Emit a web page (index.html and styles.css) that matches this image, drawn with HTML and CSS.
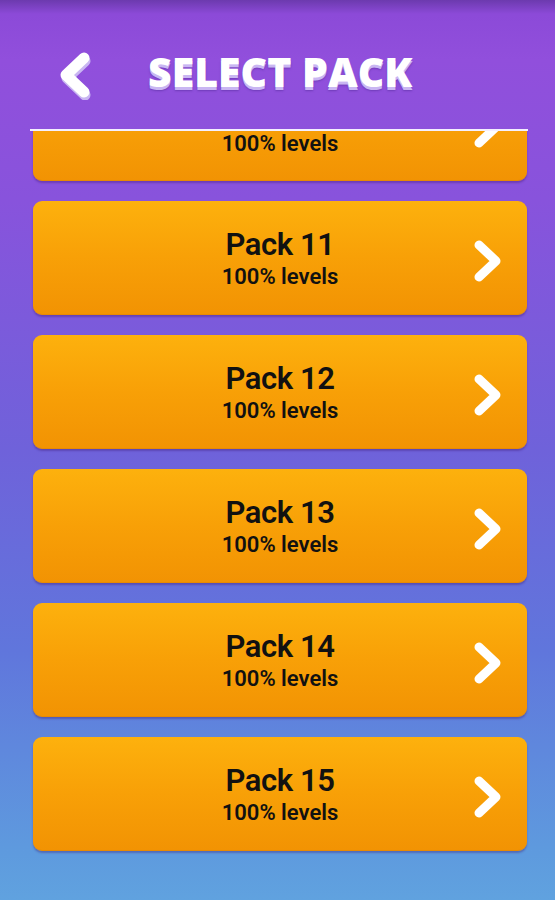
FILE: index.html
```html
<!DOCTYPE html>
<html>
<head>
<meta charset="utf-8">
<link rel="stylesheet" href="styles.css">
</head>
<body>
<div class="screen">
  <header class="header">
    <svg class="back" width="40" height="50" viewBox="0 0 40 50">
      <path d="M30 8 L12 25 L30 42" fill="none" stroke="#c9b6f2" stroke-width="11" stroke-linecap="round" stroke-linejoin="round" transform="translate(1 3)"/>
      <path d="M30 8 L12 25 L30 42" fill="none" stroke="#fff" stroke-width="11" stroke-linecap="round" stroke-linejoin="round"/>
    </svg>
    <h1 class="title">SELECT PACK</h1>
  </header>
  <div class="divider"></div>
  <div class="list">
    <div class="list-inner">
      <div class="card card--partial">
        <div class="card-text"><div class="sub">100% levels</div></div>
        <svg class="chev" width="34" height="46" viewBox="0 0 34 46"><path d="M8 7 L25 23 L8 39" fill="none" stroke="#fff" stroke-width="9" stroke-linecap="round" stroke-linejoin="round"/></svg>
      </div>
      <div class="card">
        <div class="card-text"><div class="name">Pack 11</div><div class="sub">100% levels</div></div>
        <svg class="chev" width="34" height="46" viewBox="0 0 34 46"><path d="M8 7 L25 23 L8 39" fill="none" stroke="#fff" stroke-width="9" stroke-linecap="round" stroke-linejoin="round"/></svg>
      </div>
      <div class="card">
        <div class="card-text"><div class="name">Pack 12</div><div class="sub">100% levels</div></div>
        <svg class="chev" width="34" height="46" viewBox="0 0 34 46"><path d="M8 7 L25 23 L8 39" fill="none" stroke="#fff" stroke-width="9" stroke-linecap="round" stroke-linejoin="round"/></svg>
      </div>
      <div class="card">
        <div class="card-text"><div class="name">Pack 13</div><div class="sub">100% levels</div></div>
        <svg class="chev" width="34" height="46" viewBox="0 0 34 46"><path d="M8 7 L25 23 L8 39" fill="none" stroke="#fff" stroke-width="9" stroke-linecap="round" stroke-linejoin="round"/></svg>
      </div>
      <div class="card">
        <div class="card-text"><div class="name">Pack 14</div><div class="sub">100% levels</div></div>
        <svg class="chev" width="34" height="46" viewBox="0 0 34 46"><path d="M8 7 L25 23 L8 39" fill="none" stroke="#fff" stroke-width="9" stroke-linecap="round" stroke-linejoin="round"/></svg>
      </div>
      <div class="card">
        <div class="card-text"><div class="name">Pack 15</div><div class="sub">100% levels</div></div>
        <svg class="chev" width="34" height="46" viewBox="0 0 34 46"><path d="M8 7 L25 23 L8 39" fill="none" stroke="#fff" stroke-width="9" stroke-linecap="round" stroke-linejoin="round"/></svg>
      </div>
    </div>
  </div>
</div>
</body>
</html>
```
FILE: styles.css
```css
* { box-sizing: border-box; }
html, body { margin: 0; padding: 0; }
body { width: 555px; height: 900px; overflow: hidden; font-family: Roboto, "Open Sans", sans-serif; }
.screen {
  width: 555px; height: 900px;
  display: flex; flex-direction: column;
  background: linear-gradient(180deg, #6c3aae 0px, #8c4ad8 14px, #914fdc 60px, #8853dc 200px, #6f62da 450px, #6076dc 650px, #5e9ade 850px, #60a2df 900px);
}
.header {
  height: 129px; flex: none;
  display: flex; align-items: flex-start;
  padding: 50px 0 0 54px;
}
.back { display: block; }
.title {
  margin: 1px 0 0 54px;
  font-family: "Open Sans", sans-serif;
  font-weight: 800;
  font-size: 41px;
  line-height: 1;
  color: #fff;
  text-shadow: 0 3px 0 #c9b6f2, 0 4px 2px rgba(80,40,150,0.5);
}
.divider {
  height: 2px; flex: none;
  margin: 0 27px 0 30px;
  background: #f4efff;
}
.list { flex: 1; overflow: hidden; padding: 0 28px 0 33px; }
.list-inner { margin-top: -64px; display: flex; flex-direction: column; gap: 20px; }
.card {
  height: 114px;
  border-radius: 9px;
  background: linear-gradient(180deg, #fdb10d 0%, #f8a007 50%, #f29303 100%);
  box-shadow: 0 2px 2px rgba(60,20,110,0.35);
  border-bottom: 1px solid #e88a02;
  display: flex; align-items: flex-start; justify-content: center;
  padding-top: 27px;
  position: relative;
}
.card--partial { padding-top: 65px; }
.card-text { text-align: center; color: #111; }
.name { font-size: 31px; font-weight: 600; line-height: 34px; letter-spacing: -0.4px; margin-bottom: 3px; }
.sub { font-size: 22px; font-weight: 600; line-height: 24px; }
.chev { position: absolute; right: 22px; top: 37px; }
```
